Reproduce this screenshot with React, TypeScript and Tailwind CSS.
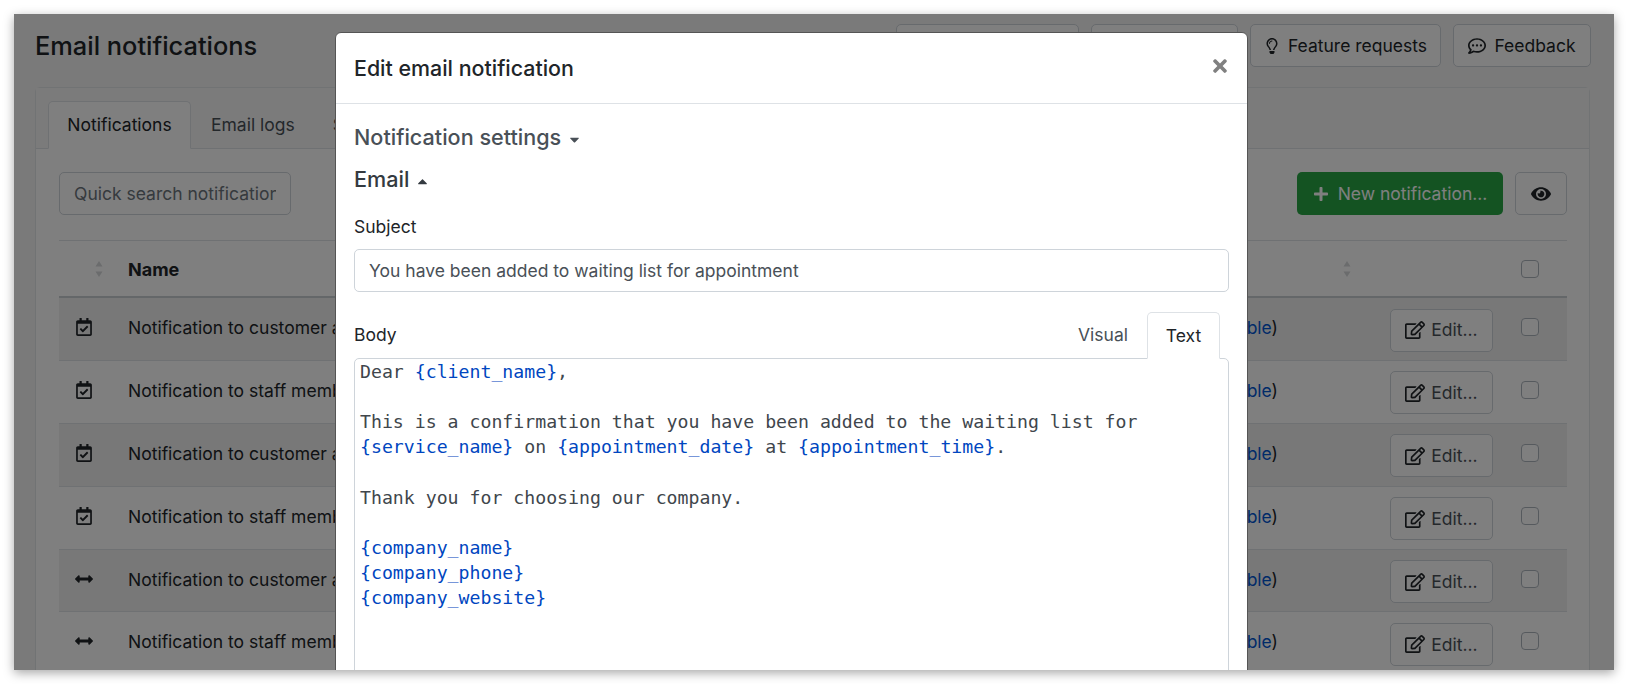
import React from "react";
import {
  FaRegCalendarCheck,
  FaArrowsAltH,
  FaRegEdit,
  FaEye,
  FaRegLightbulb,
  FaRegCommentDots,
  FaPlus,
  FaTimes,
  FaCaretDown,
  FaCaretUp,
} from "react-icons/fa";

const font = "font-['Inter','Liberation_Sans',sans-serif]";

function Sort() {
  return (
    <svg width="8" height="18" viewBox="0 0 8 18" className="text-[#d6d8da]" fill="currentColor">
      <path d="M4 1 7.5 6.5H.5Z" />
      <path d="M4 17 7.5 11.5H.5Z" />
    </svg>
  );
}

function Check() {
  return <span className="block w-[18px] h-[18px] rounded-[4px] border border-[#adb5bd] bg-white" />;
}

const rows = [
  { kind: "cal", name: "Notification to customer about waiting list appointment" },
  { kind: "cal", name: "Notification to staff member about waiting list appointment" },
  { kind: "cal", name: "Notification to customer about rescheduled appointment" },
  { kind: "cal", name: "Notification to staff member about rescheduled appointment" },
  { kind: "arrows", name: "Notification to customer about appointment status change" },
  { kind: "arrows", name: "Notification to staff member about appointment status change" },
];

function Row({ kind, name, striped }: { kind: string; name: string; striped: boolean }) {
  return (
    <div
      className={`grid grid-cols-[69px_1fr_203px_112px_103px_74px] h-[62.9px] border-b border-[#dee2e6] ${
        striped ? "bg-[#f1f1f1]" : "bg-white"
      }`}
    >
      <div className="flex justify-center pt-[20px] text-[#212529]">
        <span className="mr-[19px]">
          {kind === "cal" ? <FaRegCalendarCheck className="text-[18px]" /> : <FaArrowsAltH className="text-[18px]" />}
        </span>
      </div>
      <div className="pt-[17px] whitespace-nowrap overflow-hidden">{name}</div>
      <div className="pt-[17px] text-right whitespace-nowrap">
        Enabled (<span className="text-[#0056d2]">disable</span>)
      </div>
      <div />
      <div className="pt-[10.5px]">
        <button className="h-[43px] w-[103px] rounded-[5px] border border-[#ced4da] bg-white flex items-center justify-center gap-[6px]">
          <FaRegEdit className="text-[20px]" />
          <span className="text-[#495057] pt-px">Edit...</span>
        </button>
      </div>
      <div className="flex justify-center pt-[20px]">
        <Check />
      </div>
    </div>
  );
}

function TopButton({ children, className = "" }: { children?: React.ReactNode; className?: string }) {
  return (
    <div className={`h-[43px] rounded-[5px] border border-[#ced4da] bg-white flex items-center justify-center gap-[8px] ${className}`}>
      {children}
    </div>
  );
}

export default function App() {
  return (
    <div className={`${font} h-[684px] bg-white p-[14px] overflow-hidden text-[17.5px] text-[#212529]`}>
      <div className="relative h-[656px] overflow-hidden bg-[#f4f4f4] shadow-[0_3px_10px_rgba(0,0,0,0.35)] px-[21px] pt-[10px]">
        <div className="flex items-center justify-between h-[43px]">
          <h1 className="text-[25.4px] font-medium text-[#212529] pt-[2px]">Email notifications</h1>
          <div className="flex gap-[12px] mr-[2px]">
            <TopButton className="w-[183px]" />
            <TopButton className="w-[147px]" />
            <TopButton className="w-[191px]">
              <FaRegLightbulb className="text-[16px]" /> <span className="pt-px">Feature requests</span>
            </TopButton>
            <TopButton className="w-[138px]">
              <FaRegCommentDots className="text-[18px]" /> <span className="pt-px">Feedback</span>
            </TopButton>
          </div>
        </div>

        <div className="mt-[20px] mr-[3px] rounded-t-[5px] border border-[#e3e6e8] bg-white h-[600px]">
          <div className="h-[61px] bg-[#f7f7f7] border-b border-[#dee2e6] pt-[13px] pl-[12px] flex">
            <div className="h-[48px] w-[143px] rounded-t-[5px] border border-[#dee2e6] border-b-white bg-white flex items-center justify-center pt-px">
              Notifications
            </div>
            <div className="h-[47px] ml-[20px] flex items-center text-[#495057] pt-px">Email logs</div>
            <div className="h-[47px] ml-[38px] flex items-center text-[#495057] pt-px">Settings</div>
          </div>

          <div className="pl-[23px] pr-[22px]">
            <div className="flex items-center mt-[23px] h-[43px]">
              <input
                readOnly
                placeholder="Quick search notification"
                className="w-[232px] h-[43px] rounded-[5px] border border-[#ced4da] px-[14px] bg-white placeholder:text-[#6c757d] outline-none"
              />
              <div className="flex-1" />
              <button className="h-[43px] w-[206px] rounded-[5px] bg-[#28a745] text-white flex items-center justify-center gap-[9px]">
                <FaPlus className="text-[16px]" /> <span className="pt-px">New notification...</span>
              </button>
              <button className="ml-[12px] h-[43px] w-[52px] rounded-[5px] border border-[#ced4da] bg-white flex items-center justify-center">
                <FaEye className="text-[20px]" />
              </button>
            </div>

            <div className="mt-[25px] border-t border-[#dee2e6] h-[58px] border-b-2 border-b-[#c9ced3] grid grid-cols-[69px_1fr_203px_112px_103px_74px] items-center">
              <div className="flex justify-center pl-[11px]"><Sort /></div>
              <div className="font-bold text-[18px] pt-[2px]">Name</div>
              <div />
              <div className="pl-[65px] flex"><Sort /></div>
              <div />
              <div className="flex justify-center"><Check /></div>
            </div>
            {rows.map((r, i) => (
              <Row key={i} kind={r.kind} name={r.name} striped={i % 2 === 0} />
            ))}
          </div>
        </div>

        <div className="absolute inset-0 bg-black/50" />

        <div className="absolute left-[321px] top-[18px] w-[913px] h-[700px] bg-white rounded-[6px] border border-[#555]">
          <div className="h-[71px] border-b border-[#dee2e6] flex items-center justify-between pl-[18px] pr-[17px]">
            <h2 className="text-[21.4px] font-medium text-[#212529] pt-[1px]">Edit email notification</h2>
            <FaTimes className="text-[20px] text-[#808080] -mt-[4px]" />
          </div>
          <div className="px-[18px]">
            <div className="mt-[17px] flex items-center gap-[6px] text-[21.6px] font-medium text-[#495057] h-[33px]">
              Notification settings <FaCaretDown className="text-[15px] mt-[3px]" />
            </div>
            <div className="mt-[9px] flex items-center gap-[6px] text-[21.6px] font-medium text-[#343a40] h-[33px]">
              Email <FaCaretUp className="text-[15px] mt-[3px]" />
            </div>
            <div className="mt-[18px] h-[24px] leading-[24px] pt-px">Subject</div>
            <div className="mt-[11px] h-[43px] rounded-[5px] border border-[#ced4da] flex items-center pl-[14px] text-[#495057] pt-[2px]">
              You have been added to waiting list for appointment
            </div>
            <div className="mt-[19px] h-[47px] flex items-end relative">
              <div className="self-center h-[24px] leading-[24px]">Body</div>
              <div className="flex-1" />
              <div className="flex items-end mr-[9px]">
                <div className="h-[47px] pr-[19px] flex items-center text-[#495057] pt-px">Visual</div>
                <div className="h-[47px] w-[73px] -mb-px relative z-10 rounded-t-[5px] border border-[#dee2e6] border-b-white bg-white flex items-center justify-center pt-px">
                  Text
                </div>
              </div>
            </div>
            <div className="h-[400px] rounded-[5px] border border-[#ced4da] pl-[5px] font-['DejaVu_Sans_Mono',monospace] text-[18.2px] leading-[25.15px] text-[#40464c] whitespace-pre">
              <div>Dear <span className="text-[#0046c0]">{"{client_name}"}</span>,</div>
              <div>&nbsp;</div>
              <div>This is a confirmation that you have been added to the waiting list for</div>
              <div>
                <span className="text-[#0046c0]">{"{service_name}"}</span> on{" "}
                <span className="text-[#0046c0]">{"{appointment_date}"}</span> at{" "}
                <span className="text-[#0046c0]">{"{appointment_time}"}</span>.
              </div>
              <div>&nbsp;</div>
              <div>Thank you for choosing our company.</div>
              <div>&nbsp;</div>
              <div className="text-[#0046c0]">{"{company_name}"}</div>
              <div className="text-[#0046c0]">{"{company_phone}"}</div>
              <div className="text-[#0046c0]">{"{company_website}"}</div>
            </div>
          </div>
        </div>
      </div>
    </div>
  );
}
